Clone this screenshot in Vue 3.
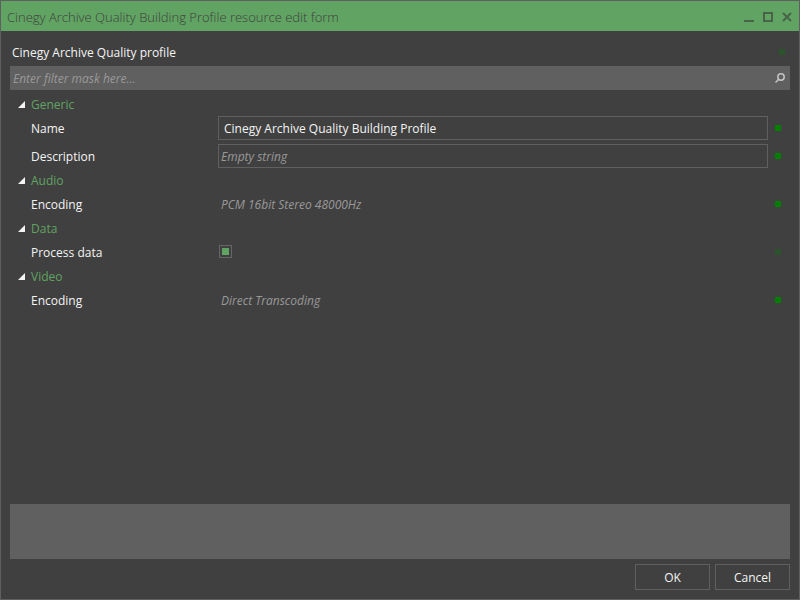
<script setup>
import { reactive, ref } from 'vue'

const filter = ref('')
const collapsed = reactive({})

const groups = reactive([
  {
    title: 'Generic',
    fields: [
      { id: 'name', label: 'Name', type: 'text', value: 'Cinegy Archive Quality Building Profile' },
      { id: 'description', label: 'Description', type: 'text', value: '', placeholder: 'Empty string' },
    ],
  },
  {
    title: 'Audio',
    fields: [{ id: 'audio-encoding', label: 'Encoding', type: 'summary', value: 'PCM 16bit Stereo 48000Hz' }],
  },
  {
    title: 'Data',
    fields: [{ id: 'process-data', label: 'Process data', type: 'check', value: true, dim: true }],
  },
  {
    title: 'Video',
    fields: [{ id: 'video-encoding', label: 'Encoding', type: 'summary', value: 'Direct Transcoding' }],
  },
])

function toggle(title) {
  collapsed[title] = !collapsed[title]
}
</script>

<template>
  <div class="window">
    <header class="titlebar">
      <h1 class="title">Cinegy Archive Quality Building Profile resource edit form</h1>
      <div class="window-buttons">
        <button type="button" class="window-button" aria-label="Minimize">
          <svg width="10" height="10" viewBox="0 0 10 10"><path d="M0 9h10" /></svg>
        </button>
        <button type="button" class="window-button" aria-label="Maximize">
          <svg width="10" height="10" viewBox="0 0 10 10"><path d="M1 1h8v8h-8z" /></svg>
        </button>
        <button type="button" class="window-button" aria-label="Close">
          <svg width="10" height="10" viewBox="0 0 10 10"><path d="M1 1l8 8M9 1l-8 8" /></svg>
        </button>
      </div>
    </header>

    <main class="content">
      <div class="heading">
        <h2 class="heading-text">Cinegy Archive Quality profile</h2>
        <span class="marker dim"></span>
      </div>

      <div class="filter">
        <input v-model="filter" class="filter-input" type="text" placeholder="Enter filter mask here..." aria-label="Filter" />
        <svg class="search" width="10" height="10" viewBox="0 0 10 10">
          <circle cx="6" cy="4" r="3.2" />
          <path d="M3.7 6.3L0.5 9.5" />
        </svg>
      </div>

      <div class="grid">
        <section v-for="group in groups" :key="group.title" class="group">
          <button type="button" class="group-head" @click="toggle(group.title)">
            <svg class="arrow" width="8" height="8" viewBox="0 0 8 8"><path d="M7 0v7h-7z" /></svg>
            <span>{{ group.title }}</span>
          </button>
          <div v-if="!collapsed[group.title]" class="fields">
            <div v-for="field in group.fields" :key="field.id" class="row">
              <label class="label" :for="field.id">{{ field.label }}</label>
              <input
                v-if="field.type === 'text'"
                :id="field.id"
                v-model="field.value"
                class="text-input"
                type="text"
                :placeholder="field.placeholder"
              />
              <input
                v-else-if="field.type === 'check'"
                :id="field.id"
                v-model="field.value"
                class="check"
                type="checkbox"
              />
              <output v-else :id="field.id" class="summary">{{ field.value }}</output>
              <span class="marker" :class="{ dim: field.dim }"></span>
            </div>
          </div>
        </section>
      </div>

      <div class="hint"></div>

      <footer class="actions">
        <button type="button" class="action">OK</button>
        <button type="button" class="action">Cancel</button>
      </footer>
    </main>
  </div>
</template>

<style>
body {
  background: #404040;
}
</style>

<style scoped>
* {
  box-sizing: border-box;
}

.window {
  display: flex;
  flex-direction: column;
  min-height: 100vh;
  border: 1px solid #606060;
  background: #404040;
  color: #f4f4f4;
  font-family: "Open Sans", "Noto Sans", sans-serif;
  font-size: 12px;
  line-height: 16px;
}

button,
input {
  margin: 0;
  padding: 0;
  border: 0;
  border-radius: 0;
  background: none;
  color: inherit;
  font: inherit;
  outline: none;
}

.titlebar {
  display: flex;
  align-items: center;
  justify-content: space-between;
  height: 30px;
  padding: 2px 7px 0 6px;
  background: #60a362;
  color: #404040;
}

.title {
  margin: 0;
  font-size: 13px;
  font-weight: 300;
  line-height: 20px;
}

.window-buttons {
  display: flex;
  gap: 9px;
}

.window-button {
  display: flex;
}

.window-button path {
  fill: none;
  stroke: #48634a;
  stroke-width: 2;
}

.content {
  display: flex;
  flex: 1;
  flex-direction: column;
  padding: 0 9px 9px;
}

.heading {
  display: flex;
  align-items: center;
  justify-content: space-between;
  height: 35px;
  padding: 7px 5px 0 2px;
}

.heading-text {
  margin: 0;
  padding-top: 2px;
  font-size: 12px;
  font-weight: 400;
}

.marker {
  width: 6px;
  height: 6px;
  background: #008000;
}

.marker.dim {
  background: #2d532d;
}

.filter {
  display: flex;
  align-items: center;
  height: 24px;
  padding: 0 5px 0 3px;
  background: #606060;
}

.filter-input {
  flex: 1;
  height: 24px;
}

.filter-input::placeholder,
.text-input::placeholder {
  color: #999999;
  font-style: italic;
  opacity: 1;
}

.search {
  fill: none;
  stroke: #c4c4c4;
  stroke-width: 1.5;
}

.grid {
  flex: 1;
  padding: 2px 9px 0 8px;
}

.group-head {
  display: flex;
  align-items: center;
  gap: 5px;
  height: 24px;
  padding-top: 2px;
  color: #60a362;
}

.arrow {
  fill: #f4f4f4;
}

.fields {
  display: grid;
  gap: 4px;
  padding-left: 13px;
}

.row {
  display: grid;
  grid-template-columns: 187px 1fr 6px;
  align-items: center;
  height: 24px;
}

.label,
.summary {
  padding-top: 2px;
}

.text-input {
  height: 24px;
  margin-right: 7px;
  padding: 0 5px;
  border: 1px solid #606060;
}

.text-input:placeholder-shown {
  padding: 0 2px;
}

.check {
  display: grid;
  place-items: center;
  width: 13px;
  height: 13px;
  margin: 0 0 1px 1px;
  border: 1px solid #666666;
  appearance: none;
}

.check:checked::before {
  width: 7px;
  height: 7px;
  background: #60a362;
  content: "";
}

.summary {
  padding-left: 3px;
  color: #999999;
  font-style: italic;
}

.hint {
  height: 55px;
  background: #606060;
}

.actions {
  display: flex;
  justify-content: flex-end;
  gap: 5px;
  padding-top: 5px;
}

.action {
  width: 75px;
  height: 26px;
  padding-top: 2px;
  border: 1px solid #606060;
}
</style>
